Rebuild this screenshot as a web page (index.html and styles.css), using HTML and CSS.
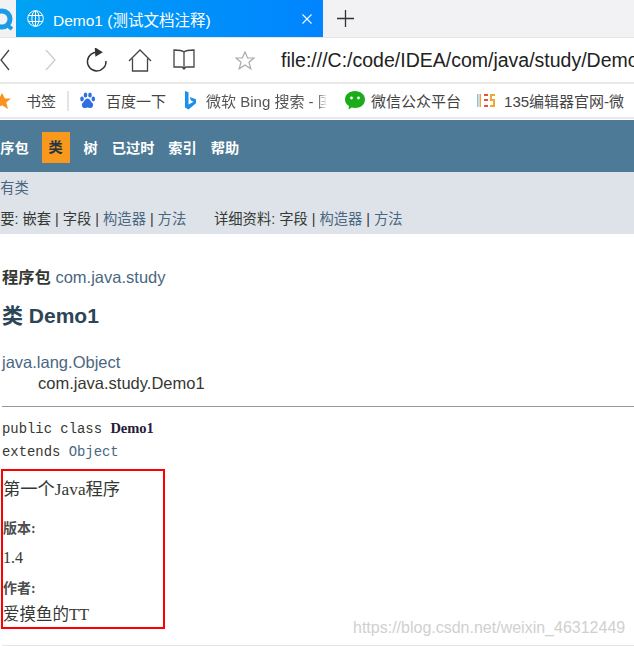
FILE: index.html
```html
<!DOCTYPE html>
<html lang="zh-CN">
<head>
  <meta charset="UTF-8" />
  <title>Demo1 (测试文档注释)</title>
  <link rel="stylesheet" href="styles.css">
</head>
<body>
  <div class="tabbar">
    <svg class="app-logo" width="16" height="37" viewBox="0 0 16 37" fill="none" stroke="#1a9be8" stroke-width="5"><circle cx="2" cy="19" r="8"/><path d="M7 25l5 4" stroke-width="4"/></svg>
    <div class="tab">
      <svg width="17" height="17" viewBox="0 0 17 17" fill="none" stroke="#fff" stroke-width="1"><circle cx="8.5" cy="8.500" r="7.800"/><ellipse cx="8.5" cy="8.500" rx="3.600" ry="7.800"/><path d="M1.200 5.500h14.600M1.200 11.500h14.600M8.500.7v15.600"/></svg>
      <span class="tab-title">Demo1 (测试文档注释)</span>
      <svg class="tab-close" width="10" height="10" viewBox="0 0 10 10" stroke="#fff" stroke-width="1.100"><path d="M.5.5l9 9M9.500.5l-9 9"/></svg>
    </div>
    <svg class="tab-new" width="17" height="17" viewBox="0 0 17 17" stroke="#333" stroke-width="1.300"><path d="M8.500 0v17M0 8.500h17"/></svg>
  </div>

  <div class="addressbar">
    <svg class="nav-back" width="10" height="22" viewBox="0 0 10 22" fill="none" stroke="#444" stroke-width="1.300"><path d="M9 1L1 11l8 10"/></svg>
    <svg class="nav-forward" width="11" height="22" viewBox="0 0 11 22" fill="none" stroke="#ccc" stroke-width="1.300"><path d="M1 1l9 10-9 10"/></svg>
    <svg class="nav-reload" width="21" height="24" viewBox="0 0 21 24" fill="none" stroke="#333" stroke-width="1.400"><path d="M12.500 4.500A9.300 9.300 0 1 0 20 13"/><path d="M9.500 0.500l6 3.800-5.500 3.200z" fill="#333"/></svg>
    <svg class="nav-home" width="24" height="23" viewBox="0 0 24 23" fill="none" stroke="#444" stroke-width="1.300"><path d="M1 12L12 1l11 11M4.500 9.500V22h15V9.500"/></svg>
    <svg class="nav-read" width="22" height="22" viewBox="0 0 22 22" fill="none" stroke="#444" stroke-width="1.300"><path d="M11 3C9 1 5 1 1 1v17h8l2 2 2-2h8V1c-4 0-8 0-10 2zM11 3v16"/></svg>
    <span class="bar-divider"></span>
    <svg class="nav-star" width="20" height="19" viewBox="0 0 20 19" fill="none" stroke="#aaa" stroke-width="1.200"><path d="M10 1l2.700 6H19l-5 4.200 1.800 6.600L10 14l-5.800 3.800L6 11.200 1 7h6.300z"/></svg>
    <span class="url">file:///C:/code/IDEA/com/java/study/Demo1.html</span>
  </div>

  <div class="bookmarks">
    <svg class="bm-star" width="16" height="16" viewBox="0 0 16 16"><path d="M5 0l2.800 5.500H14l-4.800 4 1.900 6.500L5 12.300-1 16l1.900-6.500L-4 5.500h6z" fill="#f7931e"/></svg>
    <span class="bm-label bm-first">书签</span>
    <span class="bm-divider"></span>
    <svg class="bm-icon" width="17" height="17" viewBox="0 0 17 17" fill="#2f6fe0"><ellipse cx="3" cy="7" rx="1.800" ry="2.400"/><ellipse cx="6.500" cy="3" rx="1.800" ry="2.500"/><ellipse cx="11" cy="3" rx="1.800" ry="2.500"/><ellipse cx="14.300" cy="7" rx="1.800" ry="2.400"/><path d="M8.500 6.500c2.500 0 3 3 5 4.500 1.500 2 0 5.500-2.500 5-1-.2-1.800-.4-2.500-.4S7 15.800 6 16c-2.500.5-4-3-2.500-5 2-1.500 2.500-4.500 5-4.500z"/></svg>
    <span class="bm-label bm-baidu">百度一下</span>
    <svg class="bm-icon bm-bing" width="12" height="19" viewBox="0 0 12 19"><path d="M1 0l3.500 1.200v12.300l5-2.800-2.500-1.200-1.400-3.500 6.400 2.300v4L4.500 18.500 1 16.500z" fill="#1c8fe8"/></svg>
    <span class="bm-label bm-ms">微软 Bing 搜索 - 国内版</span>
    <svg class="bm-icon bm-wechat" width="20" height="19" viewBox="0 0 20 19"><path d="M10 0c5.500 0 10 3.500 10 8.500S15.500 17 10 17c-1.200 0-2.300-.2-3.300-.5L3.500 18.500l.5-3.400C1.500 13.600 0 11.300 0 8.500 0 3.500 4.500 0 10 0z" fill="#1aad19"/><circle cx="6.500" cy="7" r="1.400" fill="#fff"/><circle cx="13.500" cy="7" r="1.400" fill="#fff"/></svg>
    <span class="bm-label bm-mp">微信公众平台</span>
    <svg class="bm-icon bm-135" width="18" height="15" viewBox="0 0 18 15"><path d="M0 1h1.500v13H0z" fill="#7fc4ea"/><path d="M2.500 1h1.500v13H2.500z" fill="#f0a23c"/><path d="M7 1h4v2H9v3h2v2H9v4h2v2H7v-2h2V8H7V6h2V3H7z" fill="#e8503a"/><path d="M13 1h5v2h-3v3h3v8h-5v-2h3V8h-3z" fill="#f3a533"/></svg>
    <span class="bm-label bm-last">135编辑器官网-微</span>
  </div>

  <nav class="topnav">
    <a class="topnav-item topnav-first">程序包</a>
    <a class="topnav-item topnav-active">类</a>
    <a class="topnav-item">树</a>
    <a class="topnav-item">已过时</a>
    <a class="topnav-item">索引</a>
    <a class="topnav-item">帮助</a>
  </nav>

  <div class="subnav">
    <div class="subnav-all">所有类</div>
    <div class="subnav-detail">
      <span class="subnav-summary">概要: 嵌套 | 字段 | <a>构造器</a> | <a>方法</a></span><span>详细资料: 字段 | <a>构造器</a> | <a>方法</a></span>
    </div>
  </div>

  <main class="content">
    <div class="package-line"><strong>程序包</strong> com.java.study</div>
    <h2 class="class-title">类 Demo1</h2>
    <div class="inherit">
      <div>java.lang.Object</div>
      <div class="inherit-child">com.java.study.Demo1</div>
    </div>
    <hr class="rule">
    <pre class="signature">public class <b>Demo1</b>
extends <a>Object</a></pre>
    <div class="doc-box">
      <div class="doc-text">第一个Java程序</div>
      <div class="doc-label">版本:</div>
      <div class="doc-value">1.4</div>
      <div class="doc-label doc-author">作者:</div>
      <div class="doc-text doc-name">爱摸鱼的TT</div>
    </div>
    <hr class="rule rule-light">
  </main>

  <div class="watermark">https://blog.csdn.net/weixin_46312449</div>
</body>
</html>
```

FILE: styles.css
```css
html, body {
  margin: 0;
  padding: 0;
}
body {
  width: 634px;
  height: 646px;
  overflow: hidden;
  position: relative;
  background: #fff;
  font-family: "Liberation Sans", "Noto Sans CJK SC", sans-serif;
}
svg {
  flex: none;
  display: block;
}

/* browser chrome */
.tabbar {
  height: 38px;
  background: #f2f2f4;
  display: flex;
  align-items: flex-start;
  box-sizing: border-box;
  border-bottom: 1px solid #e6e6e6;
}
.tab {
  width: 307px;
  height: 37px;
  background: linear-gradient(90deg, #00a2f3, #0084ff);
  color: #fff;
  display: flex;
  align-items: center;
  padding: 0 0 0 11px;
  box-sizing: border-box;
  font-size: 15.500px;
}
.tab-title {
  margin-left: 9px;
  width: 249px;
  white-space: nowrap;
}
.tab-new {
  margin: 10px 0 0 14px;
}
.addressbar {
  height: 46px;
  box-sizing: border-box;
  border-bottom: 2px solid #e8e8e8;
  display: flex;
  align-items: center;
  overflow: hidden;
  white-space: nowrap;
}
.nav-forward { margin-left: 35px; }
.nav-reload { margin-left: 30px; }
.nav-home { margin-left: 21px; }
.nav-read { margin-left: 21px; }
.bar-divider {
  width: 2px;
  height: 28px;
  background: #e6e6e6;
  margin-left: 24px;
}
.nav-star { margin-left: 16px; }
.url {
  margin-left: 26px;
  font-size: 19.500px;
  color: #222;
}
.bookmarks {
  height: 35px;
  box-sizing: border-box;
  border-bottom: 2px solid #e8e8e8;
  display: flex;
  align-items: center;
  white-space: nowrap;
  overflow: hidden;
  font-size: 15px;
  color: #444;
}
.bm-star { margin-left: -3px; }
.bm-first { margin-left: 13px; }
.bm-divider {
  width: 2px;
  height: 20px;
  background: #e4e4e4;
  margin-left: 11px;
}
.bm-icon { margin-left: 10px; }
.bm-baidu { margin-left: 10px; }
.bm-bing { margin-left: 18px; }
.bm-ms {
  margin-left: 10px;
  width: 121px;
  overflow: hidden;
  color: #555;
  -webkit-mask-image: linear-gradient(90deg, #000 92%, transparent);
}
.bm-wechat { margin-left: 18px; }
.bm-mp { margin-left: 6px; }
.bm-135 { margin-left: 16px; }
.bm-last { margin-left: 9px; }

/* javadoc nav */
.topnav {
  height: 52px;
  box-sizing: border-box;
  padding-top: 2px;
  background: #4d7a97;
  display: flex;
  align-items: center;
  font-size: 14.200px;
  font-weight: bold;
  color: #fff;
  margin-top: 1px;
}
.topnav-item {
  margin-right: 14px;
  white-space: nowrap;
}
.topnav-first {
  margin-left: -14px;
  margin-right: 13px;
}
.topnav-active {
  background: #f8981d;
  color: #253441;
  width: 28px;
  height: 31px;
  line-height: 31px;
  text-align: center;
}
.subnav {
  height: 62px;
  background: #dee3e9;
  font-size: 14.300px;
  color: #353833;
  overflow: hidden;
}
.subnav a {
  color: #4a6782;
}
.subnav-all {
  padding: 7px 0 0;
  margin-left: -14px;
  color: #4a6782;
  line-height: 18px;
}
.subnav-detail {
  margin: 13px 0 0 -14px;
  line-height: 18px;
  white-space: nowrap;
}
.subnav-summary {
  display: inline-block;
  width: 228px;
}

/* page content */
.content {
  padding: 32px 0 0 2px;
  color: #353833;
}
.package-line {
  font-size: 16.500px;
  line-height: 22px;
  color: #4a6782;
}
.package-line strong {
  color: #353833;
  font-size: 16.300px;
}
.class-title {
  font-size: 21px;
  line-height: 24px;
  margin: 16px 0 0;
  color: #2c4557;
}
.inherit {
  margin-top: 24px;
  font-size: 16.500px;
  line-height: 21px;
  color: #4a6782;
}
.inherit-child {
  margin-left: 36px;
  color: #353833;
}
.rule {
  margin: 12px 0 0 0;
  border: 0;
  height: 1px;
  background: #999;
}
.signature {
  margin: 10px 0 0;
  font-family: "Liberation Mono", monospace;
  font-size: 13.900px;
  line-height: 23px;
  color: #353833;
}
.signature b {
  font-family: "Liberation Serif", serif;
  font-size: 14.500px;
  color: #2a1a3a;
}
.signature a {
  color: #4a6782;
}
.doc-box {
  width: 164px;
  height: 160px;
  box-sizing: border-box;
  border: 2px solid #f00;
  margin: 5px 0 0 -1px;
  font-family: "Liberation Serif", "Noto Sans CJK SC", serif;
  color: #353833;
}
.doc-text {
  font-size: 17.300px;
  line-height: 20px;
  margin-top: 9px;
}
.doc-label {
  font-size: 14px;
  font-weight: bold;
  line-height: 16px;
  margin-top: 21px;
  color: #4e4e4e;
}
.doc-value {
  font-size: 16px;
  line-height: 20px;
  margin-top: 11px;
}
.doc-author {
  margin-top: 13px;
}
.doc-name {
  margin-top: 8px;
  font-size: 16.500px;
}
.rule-light {
  margin-top: 16px;
  background: #e6e6e6;
}
.watermark {
  position: absolute;
  left: 353px;
  top: 619px;
  font-size: 16px;
  line-height: 18px;
  color: #d0d0d0;
}
```
